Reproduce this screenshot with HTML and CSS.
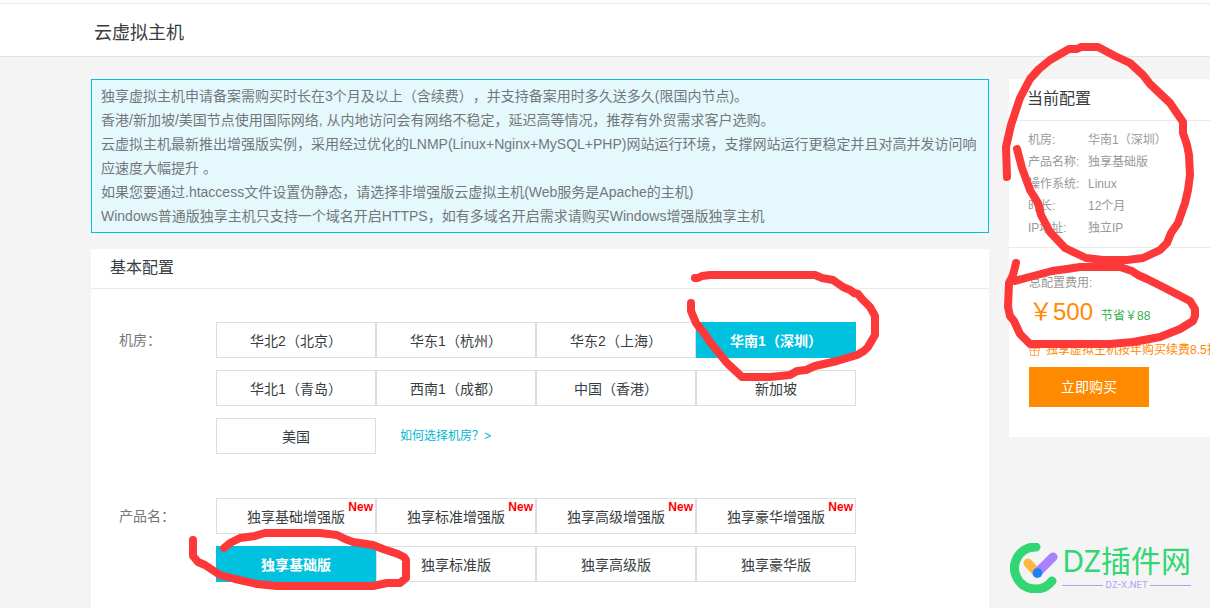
FILE: index.html
```
<!DOCTYPE html>
<html lang="zh-CN">
<head>
<meta charset="utf-8">
<meta name="viewport" content="width=device-width, initial-scale=1">
<title>云虚拟主机</title>
<link rel="stylesheet" href="styles.css">
</head>
<body>
<header class="topbar"><h1>云虚拟主机</h1></header>

<div class="layout">
  <main class="main">
    <section class="notice">
      <p>独享虚拟主机申请备案需购买时长在3个月及以上（含续费），并支持备案用时多久送多久(限国内节点)。</p>
      <p>香港/新加坡/美国节点使用国际网络, 从内地访问会有网络不稳定，延迟高等情况，推荐有外贸需求客户选购。</p>
      <p>云虚拟主机最新推出增强版实例，采用经过优化的LNMP(Linux+Nginx+MySQL+PHP)网站运行环境，支撑网站运行更稳定并且对高并发访问响应速度大幅提升 。</p>
      <p>如果您要通过.htaccess文件设置伪静态，请选择非增强版云虚拟主机(Web服务是Apache的主机)</p>
      <p>Windows普通版独享主机只支持一个域名开启HTTPS，如有多域名开启需求请购买Windows增强版独享主机</p>
    </section>

    <section class="panel">
      <h2 class="panel-title">基本配置</h2>
      <form class="config">
        <div class="field" role="radiogroup" aria-labelledby="room-label">
          <span class="field-label" id="room-label">机房：</span>
          <div class="options">
            <label class="option"><input type="radio" name="room"><span>华北2（北京）</span></label>
            <label class="option"><input type="radio" name="room"><span>华东1（杭州）</span></label>
            <label class="option"><input type="radio" name="room"><span>华东2（上海）</span></label>
            <label class="option"><input type="radio" name="room" checked><span>华南1（深圳）</span></label>
            <label class="option"><input type="radio" name="room"><span>华北1（青岛）</span></label>
            <label class="option"><input type="radio" name="room"><span>西南1（成都）</span></label>
            <label class="option"><input type="radio" name="room"><span>中国（香港）</span></label>
            <label class="option"><input type="radio" name="room"><span>新加坡</span></label>
            <label class="option"><input type="radio" name="room"><span>美国</span></label>
            <a class="help" href="#room-help">如何选择机房？&gt;</a>
          </div>
        </div>
        <div class="field" role="radiogroup" aria-labelledby="product-label">
          <span class="field-label" id="product-label">产品名：</span>
          <div class="options">
            <label class="option"><input type="radio" name="product"><span>独享基础增强版</span><b class="badge">New</b></label>
            <label class="option"><input type="radio" name="product"><span>独享标准增强版</span><b class="badge">New</b></label>
            <label class="option"><input type="radio" name="product"><span>独享高级增强版</span><b class="badge">New</b></label>
            <label class="option"><input type="radio" name="product"><span>独享豪华增强版</span><b class="badge">New</b></label>
            <label class="option"><input type="radio" name="product" checked><span>独享基础版</span></label>
            <label class="option"><input type="radio" name="product"><span>独享标准版</span></label>
            <label class="option"><input type="radio" name="product"><span>独享高级版</span></label>
            <label class="option"><input type="radio" name="product"><span>独享豪华版</span></label>
          </div>
        </div>
      </form>
    </section>
  </main>

  <aside class="summary">
    <h2 class="summary-title">当前配置</h2>
    <dl class="specs">
      <dt>机房:</dt><dd>华南1（深圳）</dd>
      <dt>产品名称:</dt><dd>独享基础版</dd>
      <dt>操作系统:</dt><dd>Linux</dd>
      <dt>时长:</dt><dd>12个月</dd>
      <dt>IP地址:</dt><dd>独立IP</dd>
    </dl>
    <div class="checkout">
      <div class="cost-label">总配置费用:</div>
      <div class="cost"><span class="price">￥500</span><span class="saving">节省￥88</span></div>
      <div class="promo">
        <svg class="gift" width="11" height="11" viewBox="0 0 11 11" aria-hidden="true"><path d="M.5 3.5h10v2H.5zM1.500 5.500v5h8v-5M5.500 3.500v7M5.500 3.500L3 .8M5.500 3.500L8 .8"/></svg>
        <span>独享虚拟主机按年购买续费8.5折</span>
      </div>
      <button class="buy" type="button">立即购买</button>
    </div>
  </aside>
</div>

<svg class="marks" width="1210" height="608" viewBox="0 0 1210 608" aria-hidden="true">
  <path d="M1007 177L1006 147 1011 125 1015 113 1020 98 1030 79 1039 69 1050 60 1069 49 1077 49 1081 47H1098L1115 56 1130 63 1143 75 1150 84 1170 103 1183 122V133L1187 145 1189 155 1190 175 1188 190 1185 203 1178 223 1171 233 1167 243 1160 250 1143 258 1127 260H1103L1086 258 1065 248 1050 232 1041 215 1038 203 1030 190 1022 168 1017 149"/>
  <path d="M1016 263L1013 275 1009 283 1008 307 1010 316 1014 321 1020 334 1030 344H1110L1133 342 1160 337 1180 329 1193 321 1195 316V309L1190 301 1163 287 1147 279 1138 275 1132 271 1120 267H1080L1067 269 1052 271 1037 275 1015 281"/>
  <path d="M695 278L698 278 702 276 710 275H815L822 278 833 280 843 287 850 290 854 293 858 294 862 299 870 307 875 316V335L868 347 864 351 857 355 837 361 815 366 806 370 797 371 790 375 770 377H742L727 363 710 342 704 333 696 323 691 311V303"/>
  <path d="M193 540V556L198 562 205 565 220 575 235 579 257 584 277 586H373L387 583 400 583 406 578V560L404 557 398 554 383 549 373 545 353 542 345 539 337 535 320 533H265L255 536 240 538 230 543 224 548"/>
</svg>

<div class="brand">
  <svg class="brand-icon" width="48" height="50" viewBox="0 0 48 50" aria-hidden="true">
    <path d="M26 4A21 21 0 1 0 42 38" stroke="#32d673"/>
    <path d="M18 20L27 30" stroke="#ffb83f"/>
    <path d="M27 30L43 14" stroke="#a881ff"/>
    <circle cx="27.500" cy="30" r="4.800" fill="#1683fb"/>
  </svg>
  <div class="brand-text">
    <div class="brand-name">DZ插件网</div>
    <div class="brand-url">DZ-X.NET</div>
  </div>
</div>
</body>
</html>
```
FILE: styles.css
```
* {
  box-sizing: border-box;
}

body {
  margin: 0;
  min-height: 100vh;
  display: flex;
  flex-direction: column;
  position: relative;
  overflow-x: hidden;
  background: #f4f4f4;
  color: #373d41;
  font: 14px/24px "Liberation Sans", "Noto Sans CJK SC", sans-serif;
  text-spacing-trim: space-all;
}

h1, h2, p, dl, dd {
  margin: 0;
  font-weight: 400;
}

.topbar {
  margin-top: 3px;
  padding: 17px 94px 11px;
  background: #fff;
  border-top: 1px solid #e8e8e8;
  border-bottom: 1px solid #e2e2e2;
  box-shadow: 0 -3px #fff;
}

.topbar h1 {
  font-size: 18px;
  line-height: 24px;
}

.layout {
  flex: 1;
  display: grid;
  grid-template-columns: minmax(0, 1fr) 201px;
  gap: 20px;
  padding: 22px 0 0 91px;
}

.main {
  display: flex;
  flex-direction: column;
  gap: 16px;
}

.notice {
  padding: 4px 9px;
  border: 1px solid #00c1de;
  background: #e5f9fd;
  color: #73777a;
}

.panel {
  flex: 1;
  background: #fff;
}

.panel-title {
  padding: 7px 19px 8px;
  border-bottom: 1px solid #ebebeb;
  font-size: 16px;
}

.config {
  display: flex;
  flex-direction: column;
  gap: 44px;
  padding: 33px 28px 24px;
}

.field {
  display: grid;
  grid-template-columns: 97px minmax(0, 640px);
}

.field-label {
  line-height: 36px;
  color: #73777a;
}

.options {
  display: grid;
  grid-template-columns: repeat(4, 1fr);
  row-gap: 12px;
}

.option {
  position: relative;
  height: 36px;
  border: 1px solid #ddd;
  line-height: 36px;
  text-align: center;
  cursor: pointer;
}

.option input {
  position: absolute;
  inset: 0;
  margin: 0;
  appearance: none;
  cursor: pointer;
}

.option:has(input:checked) {
  border-color: #00c1de;
  background: #00c1de;
  color: #fff;
  font-weight: 700;
}

.badge {
  position: absolute;
  top: 2px;
  right: 2px;
  color: #f00;
  font-size: 12px;
  line-height: 12px;
}

.help {
  padding-left: 24px;
  color: #00b7d3;
  font-size: 12px;
  line-height: 36px;
  text-decoration: none;
}

.summary {
  align-self: start;
  overflow: hidden;
  background: #fff;
  color: #999;
  font-size: 12px;
  line-height: 22px;
  white-space: nowrap;
}

.summary-title {
  padding: 8px 18px 9px;
  border-bottom: 1px solid #ebebeb;
  color: #373d41;
  font-size: 16px;
  line-height: 24px;
}

.specs {
  display: grid;
  grid-template-columns: 60px 1fr;
  padding: 8px 19px;
  border-bottom: 1px solid #ebebeb;
}

.checkout {
  padding: 24px 0 30px 20px;
}

.cost {
  display: flex;
  align-items: baseline;
  gap: 8px;
  line-height: 36px;
}

.price {
  color: #ff8a00;
  font-size: 24px;
}

.saving {
  color: #35b34a;
}

.promo {
  display: flex;
  align-items: center;
  gap: 6px;
  padding: 5px 0 6px;
  color: #ff8a00;
}

.gift {
  flex: none;
  fill: none;
  stroke: #ffab70;
}

.buy {
  width: 120px;
  height: 40px;
  padding: 0;
  border: 0;
  background: #ff8a00;
  color: #fff;
  font: inherit;
  font-size: 14px;
  cursor: pointer;
}

.marks {
  position: absolute;
  top: 0;
  left: 0;
  fill: none;
  stroke: #fd3838;
  stroke-width: 8;
  stroke-linecap: round;
  stroke-linejoin: round;
  pointer-events: none;
}

.brand {
  position: absolute;
  right: 19px;
  bottom: 15px;
  display: flex;
  gap: 4px;
}

.brand-icon {
  fill: none;
  stroke-width: 9;
  stroke-linecap: round;
}

.brand-icon circle {
  stroke: none;
}

.brand-name {
  color: #32d673;
  font: 400 30px/36px "Noto Sans", "Noto Sans CJK SC", sans-serif;
}

.brand-url {
  display: flex;
  align-items: center;
  gap: 2px;
  color: #b39df5;
  font: 9px/12px Inter, sans-serif;
}

.brand-url::before,
.brand-url::after {
  content: "";
  flex: 1;
  height: 1px;
  background: #b39df5;
}
```
